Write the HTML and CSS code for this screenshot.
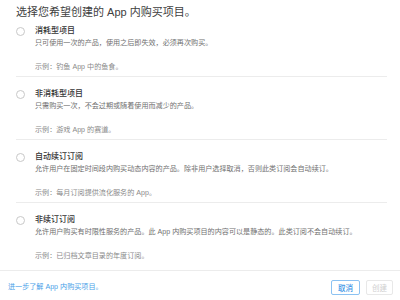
FILE: index.html
```html
<!DOCTYPE html>
<html lang="zh-CN">
<head>
<meta charset="utf-8">
<link rel="stylesheet" href="styles.css">
</head>
<body>
<div class="dialog">
  <h1 class="title">选择您希望创建的 App 内购买项目。</h1>
  <ul class="options">
    <li class="option">
      <span class="radio"></span>
      <div class="text">
        <div class="label">消耗型项目</div>
        <div class="desc">只可使用一次的产品，使用之后即失效，必须再次购买。</div>
        <div class="example">示例：钓鱼 App 中的鱼食。</div>
      </div>
    </li>
    <li class="option">
      <span class="radio"></span>
      <div class="text">
        <div class="label">非消耗型项目</div>
        <div class="desc">只需购买一次，不会过期或随着使用而减少的产品。</div>
        <div class="example">示例：游戏 App 的赛道。</div>
      </div>
    </li>
    <li class="option">
      <span class="radio"></span>
      <div class="text">
        <div class="label">自动续订订阅</div>
        <div class="desc">允许用户在固定时间段内购买动态内容的产品。除非用户选择取消，否则此类订阅会自动续订。</div>
        <div class="example">示例：每月订阅提供流化服务的 App。</div>
      </div>
    </li>
    <li class="option last">
      <span class="radio"></span>
      <div class="text">
        <div class="label">非续订订阅</div>
        <div class="desc">允许用户购买有时限性服务的产品。此 App 内购买项目的内容可以是静态的。此类订阅不会自动续订。</div>
        <div class="example">示例：已归档文章目录的年度订阅。</div>
      </div>
    </li>
  </ul>
  <div class="footer">
    <a class="link" href="#">进一步了解 App 内购买项目。</a>
    <div class="buttons">
      <button class="btn btn-cancel">取消</button>
      <button class="btn btn-create" disabled>创建</button>
    </div>
  </div>
</div>
</body>
</html>
```

FILE: styles.css
```css
html, body {
  margin: 0;
  padding: 0;
  background: #ffffff;
}

body {
  width: 400px;
  height: 300px;
  overflow: hidden;
  font-family: "Liberation Sans", "Noto Sans CJK SC", sans-serif;
}

.dialog {
  display: flex;
  flex-direction: column;
  height: 300px;
}

.title {
  margin: 0;
  padding: 5px 16px 0;
  font-size: 11px;
  line-height: 14px;
  font-weight: 400;
  color: #404040;
}

.options {
  list-style: none;
  margin: 0 13px 0 16px;
  padding: 0;
}

.option {
  display: flex;
  align-items: flex-start;
  gap: 10px;
  padding: 12px 0 4px;
  border-bottom: 1px solid #ececec;
}

.option:first-child {
  padding-top: 7px;
}

.option.last {
  border-bottom: none;
}

.radio {
  flex: none;
  box-sizing: border-box;
  width: 9px;
  height: 9px;
  margin-top: 1px;
  border: 1px solid #c8c8c8;
  border-radius: 50%;
  background: #fff;
}

.text {
  display: flex;
  flex-direction: column;
}

.label {
  font-size: 8px;
  line-height: 10px;
  font-weight: 500;
  color: #333333;
}

.desc {
  margin-top: 2px;
  font-size: 7.1px;
  line-height: 10px;
  color: #707070;
}

.example {
  margin-top: 14px;
  font-size: 7.1px;
  line-height: 10px;
  color: #8a8a8a;
}

.footer {
  margin-top: auto;
  box-sizing: border-box;
  height: 30px;
  border-top: 1px solid #ececec;
  display: flex;
  align-items: center;
  justify-content: space-between;
  padding: 3px 7px 0 8px;
}

.link {
  font-size: 7.1px;
  line-height: 10px;
  color: #4a9fe8;
  text-decoration: none;
}

.buttons {
  display: flex;
  gap: 6px;
}

.btn {
  box-sizing: border-box;
  height: 15px;
  padding: 0;
  border-radius: 2px;
  background: #fff;
  font-family: "Noto Sans CJK SC", sans-serif;
  font-size: 7.5px;
  line-height: 13px;
  font-weight: 500;
}

.btn-cancel {
  width: 29px;
  border: 1px solid #8cc2f2;
  color: #3d95e6;
}

.btn-create {
  width: 27px;
  border: 1px solid #e8e8e8;
  color: #cfcfcf;
  font-weight: 400;
}
```
